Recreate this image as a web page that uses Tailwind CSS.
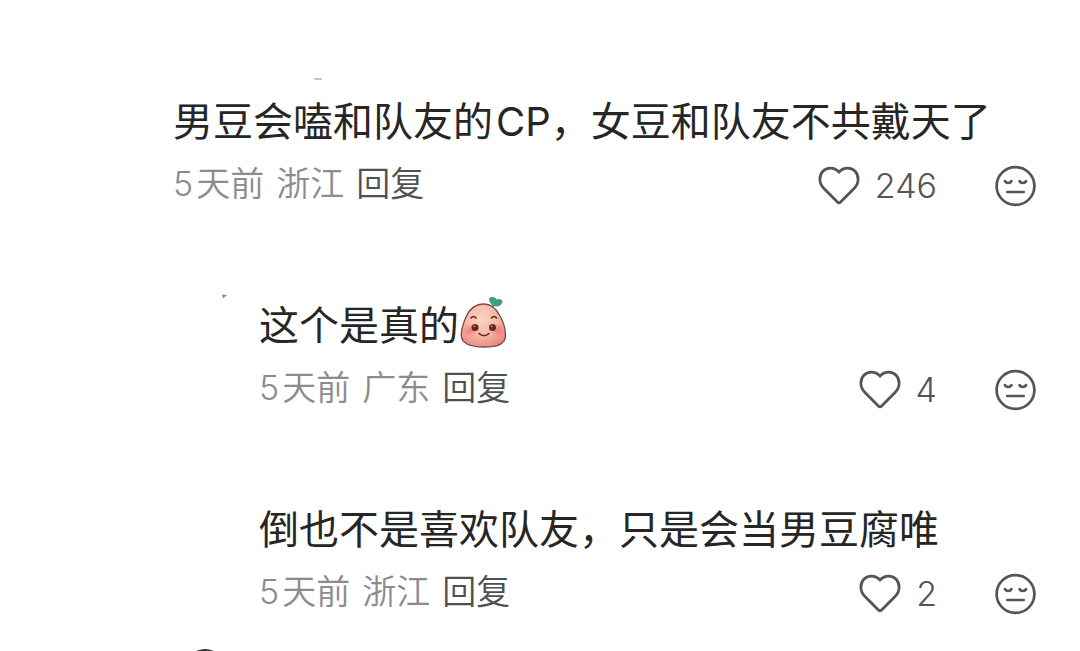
<!DOCTYPE html>
<html lang="zh-CN">
<head>
<meta charset="utf-8">
<meta name="viewport" content="width=device-width, initial-scale=1">
<title>评论</title>
<script src="https://cdn.jsdelivr.net/npm/@tailwindcss/browser@4"></script>
</head>
<body class="bg-white font-['Inter','Noto_Sans_CJK_SC',sans-serif] text-[#262626]">
<svg class="hidden" aria-hidden="true">
  <symbol id="heart" viewBox="0 0 42 40">
    <path d="M21 6.2C18.6 3.4 15.6 2.2 12.2 2.2C6.4 2.2 1.9 6.8 1.9 13.2C1.9 17.2 3.4 20 6.2 22.8L19.4 36C20.5 37.1 21.5 37.1 22.6 36L35.8 22.8C38.6 20 40.1 17.2 40.1 13.2C40.1 6.8 35.6 2.2 29.8 2.2C26.4 2.2 23.4 3.4 21 6.2Z" fill="none" stroke="currentColor" stroke-width="2.8" stroke-linejoin="round"/>
  </symbol>
  <symbol id="face" viewBox="0 0 42 42">
    <g fill="none" stroke="currentColor" stroke-width="2.7" stroke-linecap="round">
      <circle cx="21.500" cy="21" r="18.900"/>
      <path d="M11 16.200C12.400 18.600 16 18.600 17.400 16.200M25.600 16.200C27 18.600 30.600 18.600 32 16.200M13.300 27H29.700"/>
    </g>
  </symbol>
</svg>
<main class="relative min-h-screen overflow-hidden pt-[92px] pr-11 pl-[173px]">
  <span class="absolute top-[78px] left-[314px] h-0.5 w-2 rounded-full bg-[#c4c4c4]" aria-hidden="true"></span>
  <svg class="absolute top-[294px] left-[222px] size-[5px]" viewBox="0 0 5 5" aria-hidden="true"><path d="M0 0.5L5 1L1 4.5Z" fill="#938a78"/></svg>
  <div class="flex flex-col gap-[92px]">
    <article>
      <p class="text-[40px] leading-[60px]">男豆会嗑和队友的<span class="ml-[3px]">CP</span>，女豆和队友不共戴天了</p>
      <footer class="mt-3 flex h-10 items-center text-[34px] leading-10">
        <div class="flex items-center gap-3 font-[350] text-[#8c8c8c]">
          <time class="flex gap-[3px]"><span>5</span><span>天前</span></time>
          <span>浙江</span>
          <button type="button" class="text-[#505050]">回复</button>
        </div>
        <div class="mt-1 ml-auto flex items-center gap-[57px] text-[#555]">
          <button type="button" class="flex items-center gap-[15px] font-[350]" aria-label="赞 246"><svg class="h-10 w-[42px]" aria-hidden="true"><use href="#heart"/></svg><span>246</span></button>
          <button type="button" aria-label="不喜欢"><svg class="size-[42px]" aria-hidden="true"><use href="#face"/></svg></button>
        </div>
      </footer>
    </article>
    <article class="pl-[86px]">
      <p class="flex h-[60px] items-start text-[40px] leading-[60px]">这个是真的<svg class="h-[52px] w-[50px]" viewBox="0 0 50 52" role="img" aria-label="害羞">
        <defs>
          <radialGradient id="skin" cx="45%" cy="35%" r="68%"><stop offset="0" stop-color="#fbd5c4"/><stop offset=".6" stop-color="#f4b4a5"/><stop offset="1" stop-color="#e98982"/></radialGradient>
          <radialGradient id="blush"><stop offset="0" stop-color="#f26d72" stop-opacity=".8"/><stop offset="1" stop-color="#f26d72" stop-opacity="0"/></radialGradient>
        </defs>
        <path d="M25 8C16 8 10.500 13 7 21C4 28 2 35 2.300 40C3 47.500 10 51 25 51C40 51 46 47.500 46.500 40C46.500 34 44.500 26 41 20C37 12 32 8 25 8Z" fill="url(#skin)" stroke="#7a4946" stroke-width="1.300"/>
        <ellipse cx="11" cy="34.500" rx="8" ry="7" fill="url(#blush)"/><ellipse cx="39" cy="34.500" rx="7.500" ry="7" fill="url(#blush)"/>
        <path d="M34 10C31 8 29 3 32 2.500C34 2 37 3 37.500 5C40 3.500 43 4 43 6.500C42 10 39 11.500 35.500 10.500L34 12Z" transform="translate(-3 0) rotate(3 36 6) translate(3 -1)" fill="#3ba18a" stroke="#2b8270" stroke-width=".8"/>
        <circle cx="16" cy="31.500" r="3.500" fill="#64241f"/><circle cx="33.500" cy="31.500" r="3.500" fill="#64241f"/>
        <circle cx="15.300" cy="30.200" r="1" fill="#c68078"/><circle cx="32.800" cy="30.200" r="1" fill="#c68078"/>
        <path d="M12 22Q14.500 19 17 22M32.500 22Q35 19 37.500 22M20 37.500Q25 42 30 37.500" fill="none" stroke="#5c211b" stroke-width="1.600" stroke-linecap="round"/>
      </svg></p>
      <footer class="mt-3 flex h-10 items-center text-[34px] leading-10">
        <div class="flex items-center gap-3 font-[350] text-[#8c8c8c]">
          <time class="flex gap-[3px]"><span>5</span><span>天前</span></time>
          <span>广东</span>
          <button type="button" class="text-[#505050]">回复</button>
        </div>
        <div class="mt-1 ml-auto flex items-center gap-[57px] text-[#555]">
          <button type="button" class="flex items-center gap-[15px] font-[350]" aria-label="赞 4"><svg class="h-10 w-[42px]" aria-hidden="true"><use href="#heart"/></svg><span>4</span></button>
          <button type="button" aria-label="不喜欢"><svg class="size-[42px]" aria-hidden="true"><use href="#face"/></svg></button>
        </div>
      </footer>
    </article>
    <article class="pl-[86px]">
      <p class="text-[40px] leading-[60px]">倒也不是喜欢队友，只是会当男豆腐唯</p>
      <footer class="mt-3 flex h-10 items-center text-[34px] leading-10">
        <div class="flex items-center gap-3 font-[350] text-[#8c8c8c]">
          <time class="flex gap-[3px]"><span>5</span><span>天前</span></time>
          <span>浙江</span>
          <button type="button" class="text-[#505050]">回复</button>
        </div>
        <div class="mt-1 ml-auto flex items-center gap-[57px] text-[#555]">
          <button type="button" class="flex items-center gap-[15px] font-[350]" aria-label="赞 2"><svg class="h-10 w-[42px]" aria-hidden="true"><use href="#heart"/></svg><span>2</span></button>
          <button type="button" aria-label="不喜欢"><svg class="size-[42px]" aria-hidden="true"><use href="#face"/></svg></button>
        </div>
      </footer>
    </article>
  </div>
  <div class="mt-[37px] ml-3 h-0.5 w-10 overflow-hidden" aria-hidden="true"><div class="size-10 rounded-full bg-[#333]"></div></div>
</main>
</body>
</html>
